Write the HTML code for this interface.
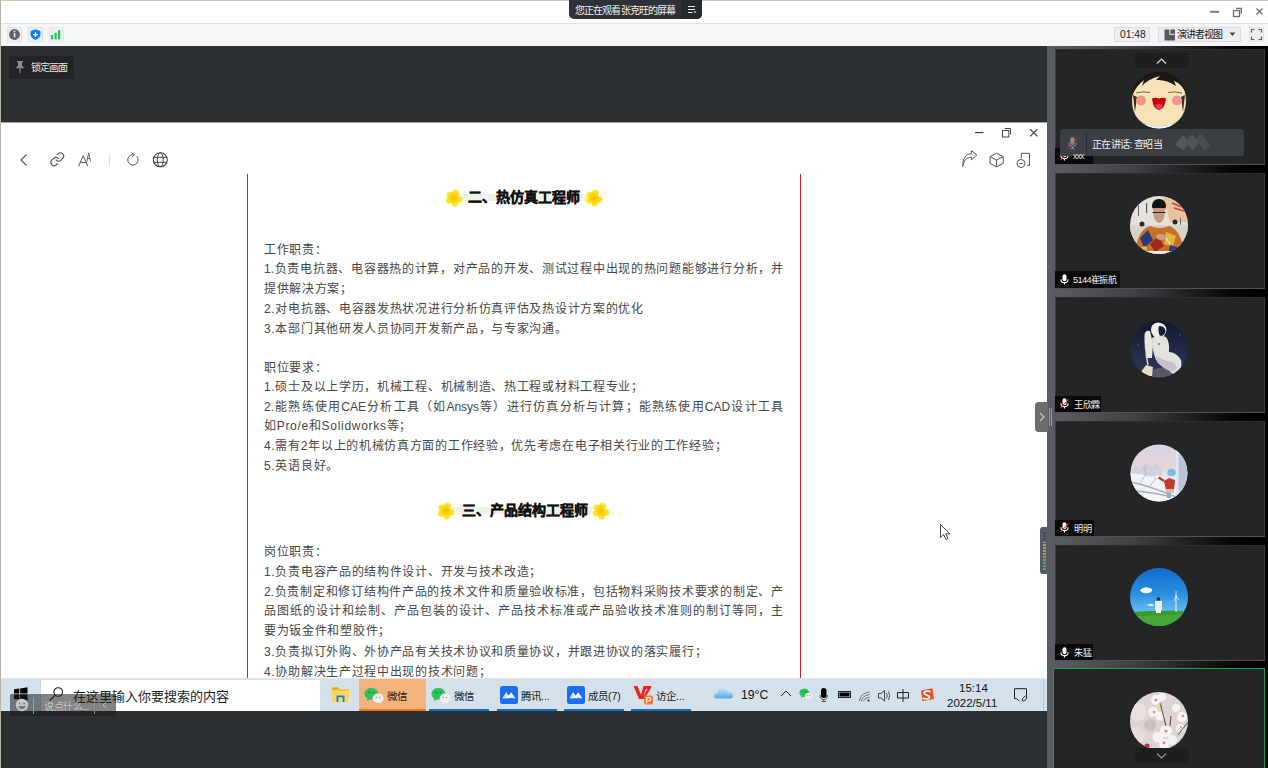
<!DOCTYPE html>
<html lang="zh-CN"><head><meta charset="utf-8">
<style>
*{margin:0;padding:0;box-sizing:border-box}
html,body{width:1268px;height:768px;overflow:hidden}
body{position:relative;background:#2d3033;font-family:"Liberation Sans",sans-serif;color:#222}
.a{position:absolute}
#top{left:0;top:0;width:1268px;height:24px;background:#fff;border-top:1px solid #cdc6b6;border-bottom:1px solid #dfe0e2}
#lb{left:0;top:0;width:1px;height:768px;background:#b8b3a6}
#tb{left:0;top:24px;width:1268px;height:22px;background:#f5f6f8}
.ib{width:15px;height:15px;background:#eceef0;border:1px solid #e2e3e5;border-radius:1px}
#doc{left:1px;top:122px;width:1046px;height:557px;background:#fff}
#task{left:1px;top:679px;width:1046px;height:32px;background:#d4e1ea}
#rp{left:1047px;top:46px;width:221px;height:722px;background:linear-gradient(to right,#5a5d62 0%,#55585d 10%,#3e4044 40%,#1a1b1c 68%,#050505 85%,#000 100%)}
.tile{left:1055px;width:210px;height:116px;background:#242527;border:1px solid #3a3c40;border-top-color:#2c2d30;border-bottom-color:#505257}
.line{text-spacing-trim:space-all;left:264px;font-size:12px;color:#464646;white-space:nowrap;line-height:16px;letter-spacing:0.7px}
.j{text-align:justify;text-align-last:justify;letter-spacing:0}
.tk{font-size:12px;line-height:15px;color:#222;white-space:nowrap}
.nm{font-size:9.2px;line-height:13px;color:#f0f0f0;white-space:nowrap;letter-spacing:-0.3px}
.tb2{font-size:10.5px;color:#1a1a1a}
.ttl{font-size:14px;font-weight:bold;-webkit-text-stroke:0.35px #111;color:#111;line-height:17px;white-space:nowrap}
</style></head><body>
<div class="a" id="top"></div>
<div class="a" id="tb"></div>
<div class="a" id="lb"></div>
<div class="a" id="doc"></div>
<div class="a" style="left:1px;top:122px;width:1046px;height:1px;background:#a0a2a4"></div>
<div class="a" id="task"></div>
<div class="a" id="rp"></div>
<div class="a tile" style="top:49px"></div>
<div class="a tile" style="top:173px"></div>
<div class="a tile" style="top:297px"></div>
<div class="a tile" style="top:421px"></div>
<div class="a tile" style="top:545px"></div>
<div class="a tile" style="left:1053px;top:668px;width:212px;border-color:#13a152;height:110px"></div>
<!-- document -->
<div class="a" id="content" style="left:0;top:0;width:1047px;height:679px;overflow:hidden;clip-path:inset(174px 0 0 0)">
<div class="a line" style="top:241.5px">工作职责：</div>
<div class="a line j" style="top:261.3px;width:519px">1.负责电抗器、电容器热的计算，对产品的开发、测试过程中出现的热问题能够进行分析，并</div>
<div class="a line" style="top:281.1px">提供解决方案；</div>
<div class="a line" style="top:300.9px">2.对电抗器、电容器发热状况进行分析仿真评估及热设计方案的优化</div>
<div class="a line" style="top:320.7px">3.本部门其他研发人员协同开发新产品，与专家沟通。</div>
<div class="a line" style="top:359.7px">职位要求：</div>
<div class="a line" style="top:379.0px">1.硕士及以上学历，机械工程、机械制造、热工程或材料工程专业；</div>
<div class="a line j" style="top:398.5px;width:519px">2.能熟练使用CAE分析工具（如Ansys等）进行仿真分析与计算；能熟练使用CAD设计工具</div>
<div class="a line" style="top:418.3px">如Pro/e和Solidworks等；</div>
<div class="a line" style="top:438.3px">4.需有2年以上的机械仿真方面的工作经验，优先考虑在电子相关行业的工作经验；</div>
<div class="a line" style="top:457.9px">5.英语良好。</div>
<div class="a line" style="top:543.8px">岗位职责：</div>
<div class="a line" style="top:564.0px">1.负责电容产品的结构件设计、开发与技术改造；</div>
<div class="a line j" style="top:584.1px;width:519px">2.负责制定和修订结构件产品的技术文件和质量验收标准，包括物料采购技术要求的制定、产</div>
<div class="a line j" style="top:603.0px;width:519px">品图纸的设计和绘制、产品包装的设计、产品技术标准或产品验收技术准则的制订等同，主</div>
<div class="a line" style="top:623.0px">要为钣金件和塑胶件；</div>
<div class="a line" style="top:644.2px">3.负责拟订外购、外协产品有关技术协议和质量协议，并跟进协议的落实履行；</div>
<div class="a line" style="top:663.9px">4.协助解决生产过程中出现的技术问题；</div>
</div>
<svg width="0" height="0" style="position:absolute"><defs>
<radialGradient id="fg" gradientUnits="userSpaceOnUse" cx="0" cy="0" r="9"><stop offset="0" stop-color="#f7b500"/><stop offset="0.45" stop-color="#fbd60a"/><stop offset="1" stop-color="#fcf250"/></radialGradient>
<symbol id="flw" viewBox="-9 -9 18 18"><g fill="url(#fg)">
<circle cx="0" cy="0" r="4.5"/>
<ellipse cx="1.5" cy="-5" rx="3.6" ry="3.6"/><ellipse cx="5.4" cy="1.6" rx="3.3" ry="3.3"/><ellipse cx="0.8" cy="5.6" rx="3.2" ry="3.2"/><ellipse cx="-5" cy="2.6" rx="3.4" ry="3.2"/><ellipse cx="-4.4" cy="-3.4" rx="3.2" ry="3.2"/>
</g></symbol></defs></svg>
<div class="a" style="left:458px;top:194px;width:130px;height:7px;background:#ecf4e8"></div>
<svg class="a" style="left:445px;top:189px" width="18" height="18"><use href="#flw"/></svg>
<svg class="a" style="left:585px;top:189px" width="18" height="18"><use href="#flw"/></svg>
<div class="a ttl" style="left:468px;top:189px">二、热仿真工程师</div>
<div class="a" style="left:452px;top:507px;width:141px;height:7px;background:#ecf4e8"></div>
<svg class="a" style="left:437px;top:502px" width="18" height="18"><use href="#flw"/></svg>
<svg class="a" style="left:592px;top:502px" width="18" height="18"><use href="#flw"/></svg>
<div class="a ttl" style="left:462px;top:502px">三、产品结构工程师</div>
<div class="a" style="left:247px;top:174px;width:1px;height:505px;background:#cc1f2a"></div>
<div class="a" style="left:800px;top:174px;width:1px;height:505px;background:#cc1f2a"></div>
<!-- doc chrome -->
<svg class="a" style="left:960px;top:122px" width="87" height="50" viewBox="960 122 87 50">
 <path d="M975 132.6H983.5" stroke="#333" stroke-width="1.1"/>
 <rect x="1002.5" y="130.5" width="6.3" height="6.5" fill="none" stroke="#444" stroke-width="1"/>
 <path d="M1004.5 128.5H1010.5V134.5" fill="none" stroke="#444" stroke-width="1"/>
 <path d="M1030.2 129.2L1037.4 136.4M1037.4 129.2L1030.2 136.4" stroke="#333" stroke-width="1.1"/>
 <path d="M962.8 166.5C963.5 160.5 967 157 971.5 157.3V159.8L976.8 155L971.5 150.7V153.6C966 153.8 962.3 158.5 962.8 166.5Z" fill="none" stroke="#555" stroke-width="1" stroke-linejoin="round"/>
 <path d="M996.6 153.2L1003.2 156.6V163.4L996.6 166.8L990 163.4V156.6Z M990 156.6L996.6 160L1003.2 156.6 M996.6 160V166.8" fill="none" stroke="#555" stroke-width="1" stroke-linejoin="round"/>
 <path d="M1021.3 158.3V153.3H1029.5V165.4H1027.3" fill="none" stroke="#555" stroke-width="1"/>
 <circle cx="1021" cy="163.5" r="4" fill="#fff" stroke="#555" stroke-width="1"/>
 <path d="M1019.2 163.5H1022.8" stroke="#555" stroke-width="0.9"/>
</svg>
<svg class="a" style="left:10px;top:145px" width="165" height="30" viewBox="10 145 165 30">
 <path d="M26.5 154.5L21 160L26.5 165.5" fill="none" stroke="#555" stroke-width="1.1"/>
 <g transform="translate(49.6 151.6) scale(0.64)" fill="none" stroke="#555" stroke-width="1.7" stroke-linecap="round"><path d="M10 13a5 5 0 0 0 7.54.54l3-3a5 5 0 0 0-7.07-7.07l-1.72 1.71"/><path d="M14 11a5 5 0 0 0-7.54-.54l-3 3a5 5 0 0 0 7.07 7.07l1.71-1.71"/></g>
 <path d="M78.6 166.2L83.2 155.7L87.8 166.2M80.2 162.6H86.2" fill="none" stroke="#555" stroke-width="1"/>
 <path d="M86.8 161.5L88.7 153.2L90.6 161.5M87.6 158.5H89.9" fill="none" stroke="#555" stroke-width="0.9"/>
 <path d="M109.5 155V166" stroke="#ddd" stroke-width="1"/>
 <path d="M136.8 156.3A5.2 5.2 0 1 1 132.6 154.6" fill="none" stroke="#555" stroke-width="1"/>
 <path d="M131.5 152.8L134.6 154.7L131.8 156.8" fill="none" stroke="#555" stroke-width="1"/>
 <circle cx="160.3" cy="159.8" r="7" fill="none" stroke="#444" stroke-width="1.1"/>
 <ellipse cx="160.3" cy="159.8" rx="3" ry="7" fill="none" stroke="#444" stroke-width="1"/>
 <path d="M153.5 157.3H167M153.5 162.3H167" stroke="#444" stroke-width="1"/>
</svg>
<!-- taskbar -->
<div class="a" style="left:1px;top:678px;width:1046px;height:1px;background:#e4e6e8"></div>
<div class="a" style="left:40px;top:679px;width:280px;height:32px;background:#fff;border-top:1px solid #e0e0e0;border-left:1px solid #ccd6dd"></div>
<svg class="a" style="left:13px;top:686px" width="16" height="16" viewBox="0 0 16 16"><path d="M1 3.2L6.3 2.5V7.6H1ZM7.2 2.4L14.5 1.3V7.6H7.2ZM1 8.5H6.3V13.6L1 12.9ZM7.2 8.5H14.5V14.8L7.2 13.7Z" fill="#000"/></svg>
<svg class="a" style="left:48px;top:686px" width="18" height="18" viewBox="0 0 18 18"><circle cx="10.2" cy="6" r="4.3" fill="none" stroke="#1a1a1a" stroke-width="1.1"/><path d="M7.2 9.1L1.8 14.6" stroke="#1a1a1a" stroke-width="1.2"/></svg>
<div class="a tk" style="left:73px;top:688.5px;font-size:13px;color:#222">在这里输入你要搜索的内容</div>
<svg class="a" style="left:331px;top:686px" width="19" height="17" viewBox="0 0 19 17"><path d="M1 2.5Q1 1.5 2 1.5H7L8.5 3H17Q18 3 18 4V15Q18 16 17 16H2Q1 16 1 15Z" fill="#f5c640"/><path d="M1 2.5Q1 1.5 2 1.5H7L8.5 3.2H1Z" fill="#dea41b"/><path d="M1 5H18V15Q18 16 17 16H2Q1 16 1 15Z" fill="#fcd664"/><path d="M5.5 16V9.5H13.5V16H11.6V11.3H7.4V16Z" fill="#1a7fd8"/></svg>
<div class="a" style="left:359px;top:679px;width:67px;height:32px;background:#f4b37c"></div>
<div class="a" style="left:359px;top:709px;width:67px;height:2px;background:#f27716"></div>
<div class="a" style="left:429px;top:709px;width:60px;height:2px;background:#0c6fc8"></div>
<div class="a" style="left:497px;top:709px;width:60px;height:2px;background:#0c6fc8"></div>
<div class="a" style="left:564px;top:709px;width:60px;height:2px;background:#0c6fc8"></div>
<div class="a" style="left:631px;top:709px;width:60px;height:2px;background:#0c6fc8"></div>
<svg width="0" height="0" style="position:absolute"><defs>
<symbol id="wx" viewBox="0 0 19 16"><ellipse cx="7" cy="6.3" rx="6.6" ry="5.6" fill="#2fc25b"/><path d="M3 10.5L2.6 13.5L5.8 11.4Z" fill="#2fc25b"/><circle cx="5" cy="5" r="0.9" fill="#14803a"/><circle cx="9" cy="5" r="0.9" fill="#14803a"/>
<ellipse cx="13.4" cy="10.6" rx="5.2" ry="4.4" fill="#eeeeee"/><path d="M15.5 14L16.5 15.8L13.8 14.6Z" fill="#eeeeee"/><circle cx="11.8" cy="9.8" r="0.7" fill="#999"/><circle cx="14.9" cy="9.8" r="0.7" fill="#999"/></symbol>
<symbol id="tm" viewBox="0 0 18 18"><rect x="0" y="0" width="18" height="18" rx="2.5" fill="#1c6ef5"/><path d="M2.6 12.2L6.2 6.3L8.6 9.8L11.2 6.3L15.4 12.2H11.8L11.2 11.3L10.3 12.2Z" fill="#fff"/><path d="M2.6 12.2L6.2 6.3L7.6 8.4L5.6 12.2Z" fill="#cfe0ff"/></symbol>
</defs></svg>
<svg class="a" style="left:364px;top:687px" width="20" height="17"><use href="#wx"/></svg>
<div class="a tk tb2" style="left:387px;top:688.5px">微信</div>
<svg class="a" style="left:431px;top:687px" width="20" height="17"><use href="#wx"/></svg>
<div class="a tk tb2" style="left:454px;top:688.5px">微信</div>
<svg class="a" style="left:500px;top:686px" width="18" height="18"><use href="#tm"/></svg>
<div class="a tk tb2" style="left:521px;top:688.5px">腾讯...</div>
<svg class="a" style="left:567px;top:686px" width="18" height="18"><use href="#tm"/></svg>
<div class="a tk tb2" style="left:588px;top:688.5px">成员(7)</div>
<svg class="a" style="left:633px;top:685px" width="21" height="20" viewBox="0 0 21 20"><path d="M0.5 1H4.5L8 10L10.5 1H18.5L17.5 4L12.5 12H16.5L15.5 14H9.5L10.5 11L14.5 4H12.8L9.5 14H6Z" fill="#e8271f"/><rect x="11" y="10.5" width="9" height="9" rx="2" fill="#f47a3a"/><path d="M13.8 18V12.8H16.3Q17.8 12.8 17.8 14.3Q17.8 15.8 16.3 15.8H14.8" fill="none" stroke="#fff" stroke-width="1.1"/></svg>
<div class="a tk tb2" style="left:656px;top:688.5px">访企...</div>
<svg class="a" style="left:713px;top:686px" width="21" height="14" viewBox="0 0 21 14"><defs><linearGradient id="cl" x1="0" y1="0" x2="0" y2="1"><stop offset="0" stop-color="#b9e0fa"/><stop offset="1" stop-color="#5aa8e6"/></linearGradient></defs><path d="M3.5 12.5Q0.5 12.3 1 9.6Q1.6 7.3 4.3 7.6Q5 3.3 9.5 2.8Q13.6 2.6 14.8 6.2Q19.5 6 20 9.5Q20.2 12.5 17 12.6Z" fill="url(#cl)"/></svg>
<div class="a tk" style="left:741px;top:687.5px;font-size:12.2px;color:#111">19°C</div>
<svg class="a" style="left:778px;top:686px" width="270" height="20" viewBox="778 686 270 20">
 <path d="M781 696L786 691L791 696" fill="none" stroke="#222" stroke-width="1"/>
 <g transform="translate(799 688) scale(0.75)"><use href="#wx" width="19" height="16"/></g>
 <rect x="821" y="688" width="5.5" height="10" rx="2.7" fill="#000"/><path d="M820 695Q820 699.5 823.7 699.5Q827.4 699.5 827.4 695M823.7 699.5V701.5M821.5 701.5H826" fill="none" stroke="#333" stroke-width="0.8"/>
 <rect x="838.5" y="691.5" width="12" height="6" fill="none" stroke="#222" stroke-width="1"/><rect x="839.5" y="692.5" width="10" height="4" fill="#000"/>
 <path d="M859.5 701Q860 693.5 869.5 692M861.5 701Q862 696 869.5 694.5M863.5 701Q864 698.2 869.5 697" fill="none" stroke="#555" stroke-width="0.8"/><circle cx="868.5" cy="700.5" r="1" fill="#222"/>
 <path d="M878.5 693.5H881L884.5 690.5V701L881 698H878.5Z" fill="none" stroke="#333" stroke-width="0.9"/><path d="M886.5 693Q888 695.7 886.5 698.5M888.5 691.5Q890.8 695.7 888.5 700" fill="none" stroke="#333" stroke-width="0.8"/>
 <path d="M903 689V702M897.5 692.5H908.5V698H897.5Z" fill="none" stroke="#222" stroke-width="1"/>
 <path d="M921 690.5L932.5 688.3L934 699L922.5 701.3Z" fill="#e6512a"/><path d="M930.5 691.8Q928 690.3 925 691.5Q923.2 692.7 925 694.3Q927.8 695.5 929.5 696.5Q930 698.5 926.5 699Q924.2 699 922.8 697.8" fill="none" stroke="#fff" stroke-width="1.6"/>
 <path d="M1014.5 698.6V688.7H1026.5V695.8Q1027.2 700.8 1023.2 700.9Q1021.2 700.6 1022.6 698.6L1025.6 695.6M1014.5 698.6H1016.5L1019.3 701.2" fill="none" stroke="#222" stroke-width="1"/>
 
</svg>
<div class="a tk" style="left:959px;top:681px;font-size:11.5px;color:#111">15:14</div>
<div class="a tk" style="left:947px;top:696px;font-size:11.5px;color:#111">2022/5/11</div>
<div class="a" style="left:1043px;top:679px;width:1px;height:32px;background:#bfcad2"></div>
<!-- chat overlay -->
<div class="a" style="left:10px;top:694px;width:106px;height:22px;background:rgba(28,30,32,0.55);border-radius:1px"></div>
<svg class="a" style="left:14px;top:697px" width="16" height="16" viewBox="0 0 16 16"><circle cx="8" cy="8" r="6.2" fill="#c8c8c8"/><circle cx="5.8" cy="6.6" r="0.9" fill="#777"/><circle cx="10.2" cy="6.6" r="0.9" fill="#777"/><path d="M4.5 9H11.5Q11 12.3 8 12.3Q5 12.3 4.5 9Z" fill="#777"/></svg>
<div class="a" style="left:33px;top:697px;width:1px;height:17px;background:#9a9a9a"></div>
<div class="a tk" style="left:44px;top:699px;font-size:10px;color:#c4c4c4;letter-spacing:-0.5px">说点什么...</div>
<div class="a" style="left:94px;top:697px;width:1px;height:17px;background:#8a8a8a"></div>
<svg class="a" style="left:101px;top:700px" width="8" height="10" viewBox="0 0 8 10"><path d="M5.5 1.5L2 5L5.5 8.5" fill="none" stroke="#bbb" stroke-width="1"/></svg>
<!-- right panel content -->
<svg class="a" style="left:1047px;top:46px" width="221" height="722" viewBox="1047 46 221 722">
<defs>
 <clipPath id="c1"><circle cx="1159" cy="100" r="28.5"/></clipPath>
 <clipPath id="c2"><circle cx="1159" cy="225" r="29"/></clipPath>
 <clipPath id="c3"><circle cx="1159" cy="349" r="28.5"/></clipPath>
 <clipPath id="c4"><circle cx="1159" cy="473" r="28.5"/></clipPath>
 <clipPath id="c5"><circle cx="1159" cy="597" r="29"/></clipPath>
 <clipPath id="c6"><circle cx="1159" cy="721" r="29"/></clipPath>
 <linearGradient id="sky" x1="0" y1="0" x2="0" y2="1"><stop offset="0" stop-color="#0f68cc"/><stop offset="0.45" stop-color="#2c8ee0"/><stop offset="0.75" stop-color="#68c0f2"/></linearGradient>
 <linearGradient id="space" x1="0" y1="0" x2="0" y2="1"><stop offset="0" stop-color="#14162a"/><stop offset="1" stop-color="#2e3c60"/></linearGradient>
 <linearGradient id="snow" x1="0" y1="0" x2="0" y2="1"><stop offset="0" stop-color="#d8d4e0"/><stop offset="0.4" stop-color="#e3d6dc"/><stop offset="0.6" stop-color="#e8ebf4"/><stop offset="1" stop-color="#c8d0e4"/></linearGradient>
 <radialGradient id="blos" cx="0.55" cy="0.5" r="0.6"><stop offset="0" stop-color="#f4eeee"/><stop offset="1" stop-color="#d8d0d0"/></radialGradient>
</defs>
<!-- tile1 avatar: cartoon face -->
<g clip-path="url(#c1)">
 <rect x="1128" y="70" width="62" height="60" fill="#2a2b2e"/>
 <path d="M1159 74Q1185 74 1186 100Q1186 126 1159 127Q1132 126 1132 100Q1133 74 1159 74Z" fill="#f7e3b6"/>
 <path d="M1132 96Q1131 76 1150 72Q1168 69 1180 76Q1188 84 1187 96Q1183 84 1174 81L1176 86Q1166 79 1156 80L1160 76Q1148 79 1142 86L1144 80Q1136 86 1132 96Z" fill="#1e1814"/>
 <path d="M1133 95L1135 112L1137 97Z M1185 95L1183 112L1181 97Z" fill="#3a2c22"/>
 <circle cx="1141" cy="100.5" r="5" fill="#f29488"/><circle cx="1177" cy="100.5" r="5" fill="#f29488"/>
 <path d="M1136 93Q1143 91 1150 92.5M1168 92.5Q1175 91 1182 93" fill="none" stroke="#5a4030" stroke-width="0.8"/>
 <path d="M1152 98.5Q1155 97 1159 98.5Q1163 97 1166 98.5Q1165 109 1159 110Q1153 109 1152 98.5Z" fill="#c8000a"/>
 <path d="M1155 105Q1159 103 1163 105Q1162 109 1159 109.5Q1156 109 1155 105Z" fill="#e83a50"/>
 <path d="M1137 121Q1159 131 1181 121L1184 132H1134Z" fill="#a8d0e4"/>
 <path d="M1146 124Q1159 129 1172 124V132H1146Z" fill="#f4f4f0"/>
</g>
<!-- tile2 avatar: photo person -->
<g clip-path="url(#c2)">
 <rect x="1128" y="195" width="62" height="60" fill="#e6e2da"/>
 <path d="M1163 197Q1185 198 1190 212V222H1170Z" fill="#e9c2a0"/>
 <path d="M1172 203L1182 207M1174 208L1184 211" stroke="#d04030" stroke-width="1.5"/>
 <rect x="1146" y="203" width="1.2" height="10" fill="#555"/><rect x="1138" y="205" width="1" height="11" fill="#666"/><rect x="1180" y="218" width="1" height="9" fill="#666"/>
 <rect x="1128" y="225" width="62" height="30" fill="#d8d2c8"/>
 <circle cx="1142" cy="224" r="2.5" fill="#2a2a2a"/><circle cx="1175" cy="222" r="2.5" fill="#2a2a2a"/>
 <path d="M1152 207Q1152 199 1159 199Q1166 199 1166 207L1165 209H1153Z" fill="#151414"/>
 <path d="M1153 208Q1153 222 1159 223Q1165 222 1165 208Z" fill="#c49a82"/>
 <path d="M1152.5 212.5H1165.5" stroke="#222" stroke-width="1.1"/>
 <path d="M1135 255Q1137 230 1150 226Q1159 230 1169 226Q1182 230 1184 255Z" fill="#c8702a"/>
 <path d="M1140 238L1148 230L1153 240L1144 248Z" fill="#2a3a7a"/>
 <path d="M1166 232L1176 236L1173 246L1164 244Z" fill="#e0b83a"/>
 <path d="M1150 244L1158 236L1164 246L1155 252Z" fill="#a02a20"/>
 <path d="M1170 245L1180 248L1178 255H1168Z" fill="#2a3a7a"/>
 <path d="M1138 248L1146 246L1148 255H1136Z" fill="#e0c040"/>
 <ellipse cx="1161" cy="237" rx="5" ry="3" fill="#cfa084"/>
 <path d="M1166 238L1170 244" stroke="#eee" stroke-width="1"/>
 <rect x="1146" y="251" width="28" height="5" fill="#f2f0ec"/>
</g>
<!-- tile3 avatar: astronaut -->
<g clip-path="url(#c3)">
 <rect x="1128" y="318" width="62" height="62" fill="url(#space)"/>
 <circle cx="1138" cy="345" r="0.5" fill="#aab"/><circle cx="1180" cy="335" r="0.5" fill="#aab"/><circle cx="1176" cy="350" r="0.4" fill="#aab"/>
 <path d="M1147 378Q1150 368 1165 367Q1174 369 1178 380Z" fill="#5e5662"/>
 <path d="M1141 372L1146 365L1153 367L1152 376L1142 376Z" fill="#e6e0be"/>
 <path d="M1144.5 335Q1145 330 1150 331L1153 344L1152 358L1147 358Q1144 350 1144.5 335Z" fill="#e8e6de"/>
 <path d="M1146 354L1148 365" stroke="#ddd8c8" stroke-width="1.5"/>
 <path d="M1151 330Q1151 323 1158 322.5Q1166 323 1166.5 330Q1166 337 1158.5 338Q1151.5 337 1151 330Z" fill="#efeee8"/>
 <path d="M1159 326Q1165 326 1165.5 331Q1165 336 1160 336Q1157.5 331 1159 326Z" fill="#1a1d30"/>
 <path d="M1152 338Q1158 334 1166 337Q1170 342 1169 352Q1176 352 1181 360Q1183 368 1177 376L1170 372L1172 364Q1163 366 1156 360Q1152 350 1152 338Z" fill="#e4e2dc"/>
 <path d="M1156 356Q1164 361 1173 362L1178 368L1172 372Q1162 368 1157 362Z" fill="#c4c2d0"/>
 <circle cx="1159" cy="344" r="1" fill="#7080b0"/>
</g>
<!-- tile4 avatar: snow -->
<g clip-path="url(#c4)">
 <rect x="1128" y="442" width="62" height="62" fill="url(#snow)"/>
 <path d="M1130 470L1136 466L1140 469L1146 462L1150 468L1156 463L1162 470V476H1130Z" fill="#c4cad8" opacity="0.6"/>
 <path d="M1128 473Q1150 474 1178 488V504H1128Z" fill="#f2f4fa"/>
 <rect x="1176" y="442" width="14" height="62" fill="#bcc4da"/>
 <rect x="1176" y="442" width="2.5" height="62" fill="#e4e8f2"/>
 <path d="M1131 482Q1150 486 1176 497M1134 491Q1150 492 1168 496" fill="none" stroke="#a6acc2" stroke-width="1.4"/>
 <path d="M1140 483L1146 474L1144 466M1150 486L1156 478M1138 490L1134 498" fill="none" stroke="#a8aec4" stroke-width="0.8"/>
 <path d="M1164 481L1169 478L1175 480L1174 490L1166 490Z" fill="#c2392e"/>
 <path d="M1164 481L1158 477" stroke="#c2392e" stroke-width="2.2"/>
 <circle cx="1157.5" cy="476.5" r="1.5" fill="#fff"/>
 <ellipse cx="1171.5" cy="472.5" rx="4.2" ry="3.8" fill="#7cbce4"/>
 <rect x="1166" y="489" width="8" height="4" fill="#d4bc98"/>
 <rect x="1167" y="493" width="4" height="5" fill="#8ab0c8"/>
</g>
<!-- tile5 avatar: sky -->
<g clip-path="url(#c5)">
 <rect x="1128" y="566" width="62" height="62" fill="url(#sky)"/>
 <path d="M1128 612Q1160 610 1190 611V628H1128Z" fill="#3a9a30"/>
 <path d="M1132 616Q1160 616 1188 614V628H1132Z" fill="#48b038" opacity="0.7"/>
 <path d="M1140 590Q1145 585 1152 589Q1153 592 1148 593Q1142 594 1140 590Z" fill="#f0f6fc"/>
 <path d="M1147 605Q1151 603 1154 605Q1152 607 1147 605Z" fill="#eef4fa"/>
 <rect x="1155" y="601" width="7" height="9" fill="#e8eef2"/><rect x="1156" y="610" width="5" height="3" fill="#f4f4f4"/>
 <circle cx="1158.5" cy="599" r="1.8" fill="#3a2a2a"/>
 <rect x="1175.5" y="595" width="1" height="17" fill="#f4f8fa"/>
 <path d="M1176 596L1174 601M1176 596L1179 600M1176 596L1176 591" stroke="#f4f8fa" stroke-width="0.7"/>
</g>
<!-- tile6 avatar: blossoms -->
<g clip-path="url(#c6)">
 <rect x="1128" y="690" width="62" height="62" fill="#ddd4d4"/>
 <circle cx="1138" cy="712" r="9" fill="#e8e0e0"/><circle cx="1136" cy="736" r="9" fill="#e6dede"/><circle cx="1150" cy="725" r="6" fill="#b8aeae" opacity="0.5"/>
 <g fill="#f7f3f3">
 <circle cx="1156" cy="700" r="5"/><circle cx="1162" cy="697" r="4"/><circle cx="1153" cy="712" r="5"/><circle cx="1160" cy="716" r="4.5"/>
 <circle cx="1166" cy="731" r="6"/><circle cx="1158" cy="737" r="5.5"/><circle cx="1172" cy="740" r="5"/><circle cx="1164" cy="744" r="5"/>
 <circle cx="1182" cy="717" r="5"/><circle cx="1176" cy="708" r="4"/><circle cx="1180" cy="728" r="4"/>
 </g>
 <g fill="#d88a8a"><circle cx="1156" cy="700" r="1.4"/><circle cx="1154" cy="712" r="1.3"/><circle cx="1166" cy="731" r="1.6"/><circle cx="1164" cy="743" r="1.4"/><circle cx="1183" cy="716" r="1.3"/><circle cx="1181" cy="727" r="1"/></g>
 <path d="M1160 703L1164 718L1166 726M1171 716L1170 726M1188 722L1178 735" stroke="#4a3a34" stroke-width="0.9" fill="none"/>
 <path d="M1160 703L1162 708" stroke="#8a9a40" stroke-width="1.6"/>
 <circle cx="1147" cy="746" r="2.5" fill="#c83030"/>
</g>
<!-- up/down buttons -->
<rect x="1135" y="53" width="54" height="15" fill="#1d1e20"/>
<path d="M1157 63.5L1161.5 59L1166 63.5" fill="none" stroke="#ddd" stroke-width="1.1"/>
<rect x="1135" y="748" width="54" height="15" fill="#1d1e20"/>
<path d="M1157 753.5L1161.5 758L1166 753.5" fill="none" stroke="#999" stroke-width="1.1"/>
<!-- labels -->
<rect x="1055" y="148" width="38" height="16" fill="#0a0a0a"/>
<rect x="1055" y="271" width="65" height="17" fill="#0a0a0a"/>
<rect x="1055" y="396" width="46" height="16" fill="#0a0a0a"/>
<rect x="1055" y="520" width="39" height="16" fill="#0a0a0a"/>
<rect x="1055" y="644" width="38" height="16" fill="#0a0a0a"/>
<symbol id="mic" viewBox="0 0 10 12"><rect x="2.8" y="0.3" width="4.4" height="7.6" rx="2.2" fill="#fff"/><path d="M1 5.6Q1 9.5 5 9.5Q9 9.5 9 5.6" fill="none" stroke="#fff" stroke-width="1.2"/><path d="M5 9.5V11.6" stroke="#fff" stroke-width="1.3"/></symbol>
<symbol id="micx" viewBox="0 0 10 12"><rect x="2.8" y="0.3" width="4.4" height="7.6" rx="2.2" fill="#fff"/><path d="M1 5.6Q1 9.5 5 9.5Q9 9.5 9 5.6" fill="none" stroke="#fff" stroke-width="1.2"/><path d="M5 9.5V11.6" stroke="#fff" stroke-width="1.3"/><path d="M0.5 11L9.5 1.3" stroke="#e0402f" stroke-width="1.2"/></symbol>
<use href="#micx" x="1060" y="150" width="9" height="11"/>
<use href="#mic" x="1060" y="274" width="9" height="11"/>
<use href="#micx" x="1060" y="398" width="9" height="11"/>
<use href="#micx" x="1060" y="522" width="9" height="11"/>
<use href="#mic" x="1060" y="647" width="9" height="11"/>
<!-- speaking overlay -->
<rect x="1060" y="129" width="184" height="27" rx="3" fill="#3b3e43"/>
<rect x="1086" y="132" width="1" height="21" fill="#2c2e32"/>
<g transform="translate(1067.5 137)"><rect x="2.8" y="0.3" width="4.4" height="7.6" rx="2.2" fill="#8c8f94"/><path d="M1 5.6Q1 9.5 5 9.5Q9 9.5 9 5.6" fill="none" stroke="#8c8f94" stroke-width="1"/><path d="M5 9.5V11.6M3 11.6H7" stroke="#8c8f94" stroke-width="1"/><path d="M0.2 11.4L9.8 1.4" stroke="#d9402f" stroke-width="1"/></g>
<path d="M1175 145L1183 135L1189 142L1184 150Z" fill="#55585d"/><path d="M1185 142L1192 134L1199 142L1193 151Z" fill="#505358"/><path d="M1196 139L1201 134L1210 145L1204 151Z" fill="#4a4d52"/>
</svg>
<div class="a nm" style="left:1092px;top:137.5px;font-size:10px;letter-spacing:-0.6px">正在讲话: 查昭当</div>
<div class="a nm" style="left:1073px;top:150px;font-size:9px;color:#ddd;letter-spacing:-1px">xxx</div>
<div class="a nm" style="left:1073px;top:274px;letter-spacing:-0.6px">5144崔振航</div>
<div class="a nm" style="left:1074px;top:398.5px">王欣霖</div>
<div class="a nm" style="left:1074px;top:522.5px">明明</div>
<div class="a nm" style="left:1074px;top:646.5px">朱猛</div>
<!-- tabs -->
<div class="a" style="left:1035px;top:402px;width:13px;height:30px;background:#6b6b6b;border-radius:4px 0 0 4px"></div>
<svg class="a" style="left:1035px;top:402px" width="20" height="30" viewBox="0 0 20 30"><path d="M5 11L9 15L5 19" fill="none" stroke="#c8c8c8" stroke-width="1.1"/><path d="M14.5 6V24M16.5 6V24" stroke="#aaaaaa" stroke-width="0.8"/></svg>
<div class="a" style="left:1040px;top:527px;width:8px;height:47px;background:#565a66;border-radius:3px 0 0 3px"></div>
<div class="a" style="left:1043px;top:532px;width:3px;height:38px;background:linear-gradient(to bottom,#474b55 0%,#474b55 24%,#b89a40 27%,#a8a848 50%,#78a850 70%,#40a888 88%,#38a890 100%)"></div>
<div class="a" style="left:1043px;top:532px;width:3px;height:38px;background:repeating-linear-gradient(to bottom,transparent 0,transparent 2px,#555966 2px,#555966 3px)"></div>
<!-- cursor -->
<svg class="a" style="left:939px;top:523px" width="14" height="18" viewBox="0 0 14 18"><path d="M1.5 1.5V14.5L4.5 11.5L7 16.5L9 15.5L6.8 10.8H11Z" fill="#fff" stroke="#333" stroke-width="0.9" stroke-linejoin="round"/></svg>
<!-- top bar -->
<div class="a" style="left:569px;top:0;width:133px;height:19px;background:#2e3135;border-radius:0 0 5px 5px;overflow:hidden">
 <div class="a" style="left:112px;top:0;width:21px;height:19px;background:#272a2d"></div>
 <div class="a" style="left:6px;top:4px;font-size:10px;line-height:13px;color:#f2f2f2;white-space:nowrap;letter-spacing:-0.9px">您正在观看张克旺的屏幕</div>
 <svg class="a" style="left:118px;top:5px" width="10" height="9" viewBox="0 0 10 9"><path d="M1 1.5H8M1 4.5H8M1 7.5H5.5" stroke="#e8e8e8" stroke-width="1.1"/><path d="M6.5 6.5h3l-1.5 1.8z" fill="#e8e8e8"/></svg>
</div>
<svg class="a" style="left:1205px;top:5px" width="63" height="14" viewBox="0 0 63 14">
 <path d="M5 6.8H14" stroke="#7a7d81" stroke-width="2"/>
 <rect x="28.5" y="5.5" width="6" height="6" fill="none" stroke="#6a6d71" stroke-width="1.3"/>
 <path d="M31 3.3H36.3V8.8" fill="none" stroke="#6a6d71" stroke-width="1.3"/>
 <path d="M51.5 3.5L57.5 9.5M57.5 3.5L51.5 9.5" stroke="#6a6d71" stroke-width="1.3"/>
</svg>
<!-- toolbar -->
<div class="a ib" style="left:7px;top:27px"></div>
<div class="a ib" style="left:28px;top:27px"></div>
<div class="a ib" style="left:49px;top:27px"></div>
<svg class="a" style="left:7px;top:27px" width="60" height="15" viewBox="0 0 60 15">
 <circle cx="7.5" cy="7.5" r="5.4" fill="#606265"/>
 <rect x="6.8" y="6" width="1.5" height="4.3" fill="#eee"/><circle cx="7.5" cy="4.4" r="0.9" fill="#eee"/>
 <path d="M28.5 2.2L33.4 3.9V7.6C33.4 10.4 31 12.2 28.5 13C26 12.2 23.6 10.4 23.6 7.6V3.9Z" fill="#1677ff"/>
 <path d="M28.5 5.3V10M26.1 7.6H30.9" stroke="#fff" stroke-width="1.4"/>
 <rect x="44" y="8" width="2.2" height="4.3" fill="#1ec45c"/><rect x="47.5" y="5.8" width="2.2" height="6.5" fill="#1ec45c"/><rect x="51" y="3.2" width="2.2" height="9.1" fill="#1ec45c"/>
</svg>
<div class="a" style="left:1114px;top:27px;width:36px;height:15px;background:#eceef0;border:1px solid #dcdde0"></div>
<div class="a" style="left:1120px;top:27.5px;font-size:10.3px;line-height:13px;color:#222;letter-spacing:0">01:48</div>
<div class="a" style="left:1158px;top:27px;width:83px;height:15px;background:#eceef0;border:1px solid #dcdde0"></div>
<svg class="a" style="left:1164px;top:29px" width="12" height="12" viewBox="0 0 12 12"><path d="M0.5 0.5H5.3V5.8H11V11.5H0.5Z" fill="#58595c"/><rect x="6.3" y="0.5" width="4.7" height="4.3" fill="#58595c"/></svg>
<div class="a" style="left:1177px;top:28px;font-size:10px;line-height:13px;color:#1a1a1a;letter-spacing:-1px;white-space:nowrap">演讲者视图</div>
<svg class="a" style="left:1229px;top:32px" width="7" height="5" viewBox="0 0 7 5"><path d="M0.5 0.5H6.5L3.5 4z" fill="#444"/></svg>
<div class="a" style="left:1249px;top:27px;width:15px;height:15px;background:#eceef0;border:1px solid #e2e3e5"></div>
<svg class="a" style="left:1249px;top:27px" width="15" height="15" viewBox="0 0 15 15"><path d="M2.5 5.5V2.5H5.5M9.5 2.5H12.5V5.5M12.5 9.5V12.5H9.5M5.5 12.5H2.5V9.5" fill="none" stroke="#5c5f63" stroke-width="1.2"/></svg>
<!-- pin box -->
<div class="a" style="left:9px;top:56px;width:65px;height:23px;background:#232427;border-radius:2px"></div>
<svg class="a" style="left:15px;top:60px" width="10" height="14" viewBox="0 0 10 14"><path d="M2 1H8V2.2H7V5.5L8.8 7.2V8.2H5.6V13H4.4V8.2H1.2V7.2L3 5.5V2.2H2Z" fill="#8b8c8e"/></svg>
<div class="a" style="left:31px;top:61px;font-size:10px;line-height:13px;color:#e8e8e8;letter-spacing:-1px;white-space:nowrap">锁定画面</div>

</body></html>
